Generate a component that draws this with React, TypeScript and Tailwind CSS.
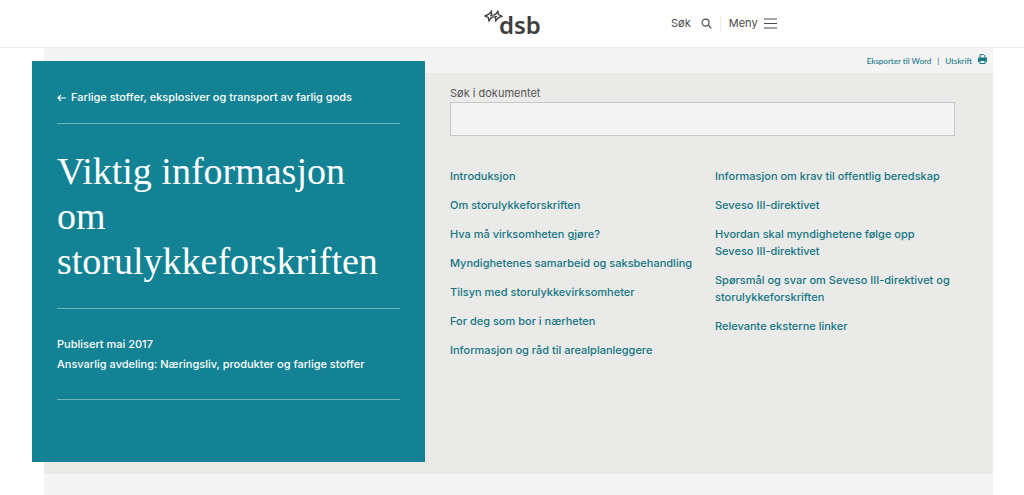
import { FormEvent, useState } from "react";

interface DocLink {
    title: string,
    href: string
}

const leftLinks: DocLink[] = [
    { title: "Introduksjon", href: "#introduksjon" },
    { title: "Om storulykkeforskriften", href: "#om" },
    { title: "Hva må virksomheten gjøre?", href: "#virksomheten" },
    { title: "Myndighetenes samarbeid og saksbehandling", href: "#samarbeid" },
    { title: "Tilsyn med storulykkevirksomheter", href: "#tilsyn" },
    { title: "For deg som bor i nærheten", href: "#naerheten" },
    { title: "Informasjon og råd til arealplanleggere", href: "#areal" },
];

const rightLinks: DocLink[] = [
    { title: "Informasjon om krav til offentlig beredskap", href: "#beredskap" },
    { title: "Seveso III-direktivet", href: "#seveso" },
    { title: "Hvordan skal myndighetene følge opp Seveso III-direktivet", href: "#oppfolging" },
    { title: "Spørsmål og svar om Seveso III-direktivet og storulykkeforskriften", href: "#sporsmal" },
    { title: "Relevante eksterne linker", href: "#linker" },
];

function Logo() {
    return <a href="#" aria-label="dsb" className="flex h-7 w-14 text-[#3d3d3d]">
        <svg width="19" height="13" viewBox="0 0 19 13" fill="none" stroke="currentColor" strokeWidth="1.4" strokeLinejoin="miter" className="shrink-0" aria-hidden="true">
            <path d="M8.4 5.2 7.5 4.4 7.4 1.4 5.2 4 1 6 4.2 7.4 5 10.8 6.8 8.2 9.4 7.2" />
            <path d="M9.6 4.9 12 4 13.8 1.4 14.5 4.6 18 6.2 14.2 7.8 11.8 10.8 11.5 7.8 10.6 6.9" />
            <path d="M6 5.6 9.5 6 13 6.6" strokeWidth="1.1" />
        </svg>
        <span className="-ml-1 font-['Noto_Sans'] text-[24px] leading-[30px] font-semibold">dsb</span>
    </a>
}

function Header() {
    return <header className="grid h-12 grid-cols-[1fr_auto_1fr] items-center border-b border-[#ececec] bg-white">
        <div />
        <Logo />
        <nav className="flex items-center pl-[131px] text-[11px] text-[#4c4c4c]">
            <button type="button" className="flex items-center gap-2.5 pr-2">
                Søk
                <svg width="11" height="11" viewBox="0 0 12 12" fill="none" stroke="currentColor" strokeWidth="1.3" aria-hidden="true">
                    <circle cx="5" cy="5" r="3.8" />
                    <path d="m7.8 7.8 3.4 3.4" />
                </svg>
            </button>
            <button type="button" className="flex items-center gap-1.5 border-l border-[#ececec] pl-2">
                Meny
                <svg width="13" height="11" viewBox="0 0 13 11" stroke="currentColor" strokeWidth="1.2" aria-hidden="true">
                    <path d="M0 1h13M0 5.5h13M0 10h13" />
                </svg>
            </button>
        </nav>
    </header>
}

function TitleCard() {
    return <div className="-mt-3 mb-3 -ml-3 w-[393px] shrink-0 bg-[#128294] px-[25px] pb-[62px] text-white">
        <div className="border-b border-[#6fb3be] pt-7 pb-[17px]">
            <a href="#" className="flex items-center gap-[5px] text-[11px] leading-[17px] font-medium">
                <svg width="9" height="8" viewBox="0 0 9 8" fill="none" stroke="currentColor" strokeWidth="1.2" aria-hidden="true">
                    <path d="M9 4H1M4 1 1 4l3 3" />
                </svg>
                Farlige stoffer, eksplosiver og transport av farlig gods
            </a>
        </div>
        <h1 className="border-b border-[#6fb3be] pt-[25px] pb-[24px] font-['Liberation_Serif',serif] text-[38px] leading-[45px]">
            Viktig informasjon om storulykkeforskriften
        </h1>
        <div className="border-b border-[#6fb3be] pt-[25px] pb-[25px] text-[11px] leading-5 font-medium">
            <p>Publisert mai 2017</p>
            <p>Ansvarlig avdeling: Næringsliv, produkter og farlige stoffer</p>
        </div>
    </div>
}

function LinkList({ links }: { links: DocLink[] }) {
    return <ul className="flex flex-col gap-3">
        {links.map((link) => (
            <li key={link.href}>
                <a href={link.href} className="block text-[11px] leading-[17px] font-medium text-[#157684]">{link.title}</a>
            </li>
        ))}
    </ul>
}

export default function App() {
    const [query, setQuery] = useState("");

    const searchHandler = (e: FormEvent<HTMLFormElement>) => {
        e.preventDefault();
    }

    return <div className="min-h-screen bg-white font-['Inter',sans-serif]">
        <Header />
        <main className="mr-[31px] ml-11 bg-[#f4f4f4] pb-6">
            <div className="flex h-[25px] items-center justify-end pr-1.5 font-['Lato',sans-serif] text-[8px] font-medium text-[#157684]">
                <a href="#word">Eksporter til Word</a>
                <span className="px-1.5">|</span>
                <a href="#print" className="flex items-center gap-1.5">
                    Utskrift
                    <svg width="9" height="10" viewBox="0 0 9 10" className="mb-1" aria-hidden="true">
                        <path d="M2 4V.6h3.8L7 1.8V4" fill="none" stroke="currentColor" />
                        <path d="M1 3.6h7a1 1 0 0 1 1 1V8H7.4V6.2H1.6V8H0V4.6a1 1 0 0 1 1-1Z" fill="currentColor" />
                        <path d="M2 6.5h5v3H2z" fill="none" stroke="currentColor" />
                    </svg>
                </a>
            </div>
            <section className="flex bg-[#eaeae8]">
                <TitleCard />
                <div className="min-w-0 flex-1 pt-3 pr-[38px] pl-[25px]">
                    <form onSubmit={searchHandler}>
                        <label htmlFor="docSearch" className="block text-[11px] leading-[17px] text-[#555]">Søk i dokumentet</label>
                        <input id="docSearch" name="docSearch" type="text" value={query} onChange={(e) => setQuery(e.target.value)} className="block h-[34px] w-full border border-[#c8c8c8] bg-[#f4f4f4] px-2 text-xs outline-none" />
                    </form>
                    <nav className="mt-8 grid grid-cols-[245fr_240fr] gap-5">
                        <LinkList links={leftLinks} />
                        <LinkList links={rightLinks} />
                    </nav>
                </div>
            </section>
        </main>
    </div>
}
